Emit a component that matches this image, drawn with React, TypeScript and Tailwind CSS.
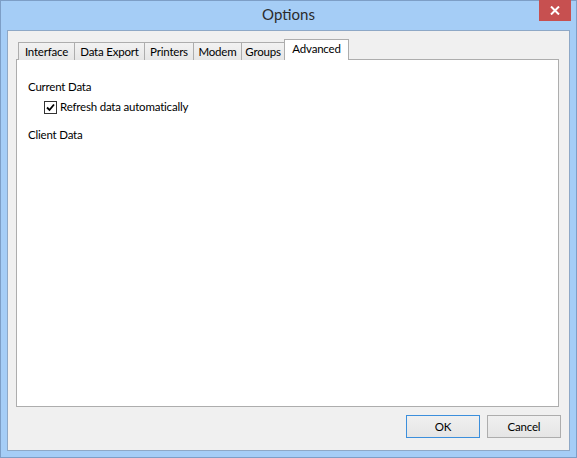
const font = { fontFamily: 'Lato, "Noto Sans", sans-serif' };

type TabProps = { label: string; width: string; active?: boolean; first?: boolean };

function Tab({ label, width, active = false, first = false }: TabProps) {
  if (active) {
    return (
      <div
        className={`-ml-px relative z-20 flex h-[21px] ${width} items-start justify-center border border-b-0 border-[#adadad] bg-white pt-[1px] leading-[16px] text-black`}
      >
        {label}
      </div>
    );
  }
  return (
    <div
      className={`${first ? "" : "-ml-px"} flex h-[18px] ${width} items-center justify-center border border-b-0 border-[#adadad] bg-gradient-to-b from-[#f2f2f2] to-[#e6e6e6] leading-[16px] text-black`}
    >
      {label}
    </div>
  );
}

function DialogButton({ children, primary = false }: { children: React.ReactNode; primary?: boolean }) {
  return (
    <button
      className={`flex h-[23px] w-[74px] items-center justify-center border bg-gradient-to-b from-[#f0f0f0] to-[#e5e5e5] text-black ${
        primary ? "border-[#3c8fdc]" : "border-[#adadad]"
      }`}
    >
      {children}
    </button>
  );
}

export default function App() {
  return (
    <div style={font} className="flex h-[458px] w-[577px] flex-col border border-[#7d9ec6] bg-[#a5cdf6]">
      {/* title bar */}
      <div className="relative flex h-[29px] shrink-0 items-center justify-center">
        <span className="pb-[2px] text-[15px] text-[#2b2b2b]">Options</span>
        <div className="absolute right-[5px] top-[-1px] flex h-[21px] w-[32px] items-center justify-center bg-[#c75050]">
          <svg width="10" height="9" viewBox="0 0 10 9">
            <path d="M1 0.5 L9 8.5 M9 0.5 L1 8.5" stroke="white" strokeWidth="2" />
          </svg>
        </div>
      </div>

      {/* client area */}
      <div className="mx-[6px] flex h-[421px] flex-col border border-[#8ea8c6] bg-[#f0f0f0] pl-[8px] pr-[10px] pt-[8px] text-[11.5px] tracking-[-0.2px]">
        <div className="relative z-10 -mb-px flex items-end pl-[2px]">
          <Tab label="Interface" width="w-[57px]" first />
          <Tab label="Data Export" width="w-[71px]" />
          <Tab label="Printers" width="w-[50px]" />
          <Tab label="Modem" width="w-[49px]" />
          <Tab label="Groups" width="w-[44px]" />
          <Tab label="Advanced" width="w-[65px]" active />
        </div>

        <div className="flex h-[348px] flex-col border border-[#adadad] bg-white pl-[11px] pt-[19px] text-black">
          <div className="h-[16px] leading-[16px]">Current Data</div>
          <label className="mt-[4px] flex h-[16px] items-center pl-[16px]">
            <span className="flex h-[13px] w-[13px] items-center justify-center border border-[#333333] bg-white">
              <svg width="9" height="9" viewBox="0 0 9 9">
                <path d="M1 4.5 L3.5 7 L8 1.5" fill="none" stroke="black" strokeWidth="1.8" />
              </svg>
            </span>
            <span className="ml-[3px] leading-[16px]">Refresh data automatically</span>
          </label>
          <div className="mt-[12px] h-[16px] leading-[16px]">Client Data</div>
        </div>

        <div className="-mr-[2px] mt-[8px] flex justify-end gap-[7px]">
          <DialogButton primary>OK</DialogButton>
          <DialogButton>Cancel</DialogButton>
        </div>
      </div>
    </div>
  );
}
